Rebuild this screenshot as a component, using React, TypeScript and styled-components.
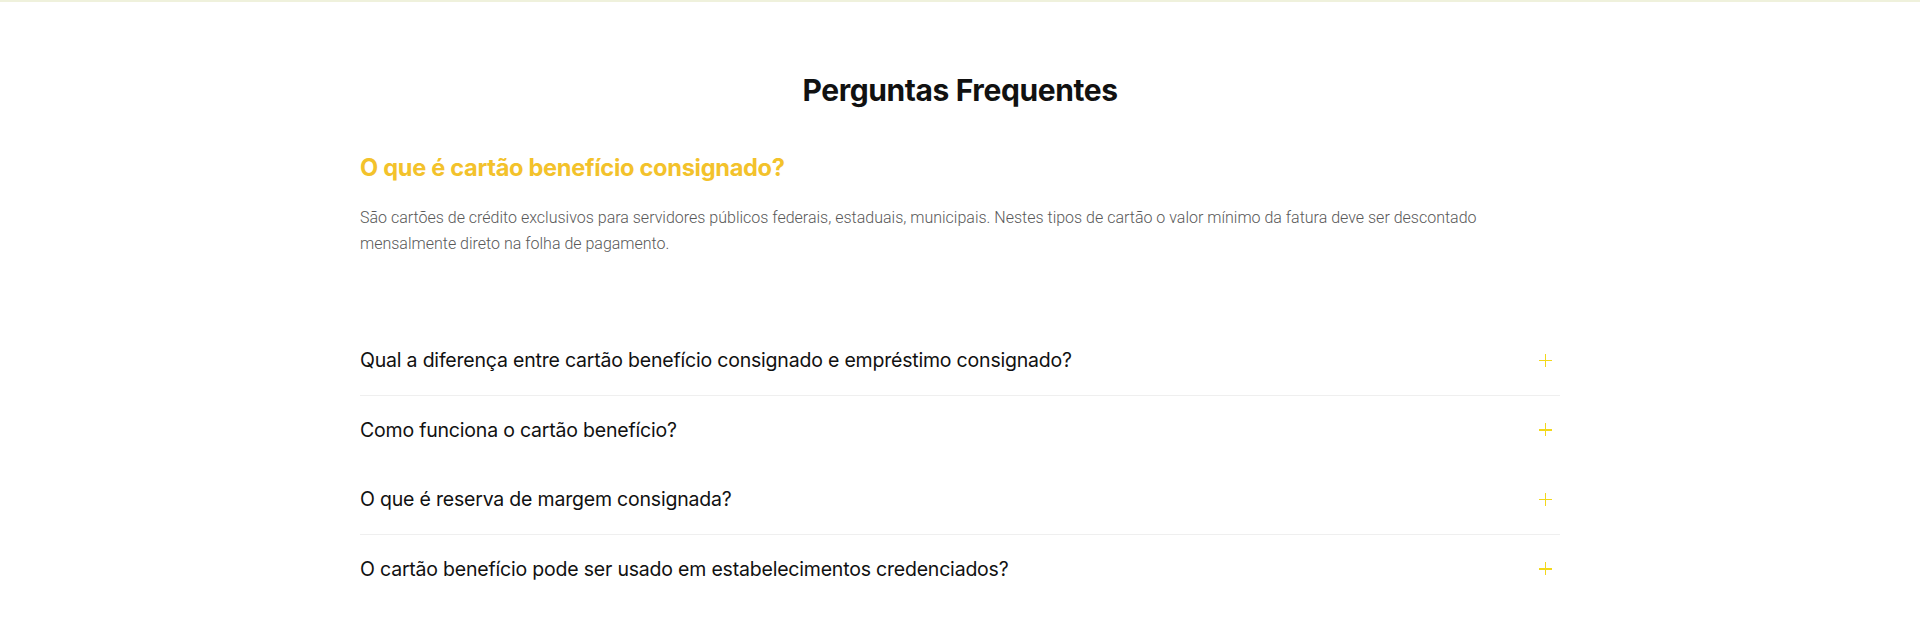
import React, { useState } from 'react';
import styled, { createGlobalStyle } from 'styled-components';

const GlobalStyle = createGlobalStyle`
  html, body {
    margin: 0;
    padding: 0;
    background: #ffffff;
  }
  * {
    box-sizing: border-box;
  }
`;

const Page = styled.div`
  min-height: 640px;
  border-top: 2px solid #eff1dc;
  font-family: Inter, 'Noto Sans', sans-serif;
`;

const Section = styled.section`
  width: 1200px;
  margin: 0 auto;
  padding-top: 68px;
`;

const Title = styled.h2`
  margin: 0 0 42px;
  text-align: center;
  font-size: 30px;
  line-height: 40px;
  font-weight: 700;
  letter-spacing: -0.4px;
  color: #111111;
`;

const OpenQuestion = styled.h3`
  margin: 0 0 21px;
  font-size: 23.6px;
  line-height: 32px;
  font-weight: 700;
  letter-spacing: -0.3px;
  color: #f3c22b;
`;

const Answer = styled.p`
  margin: 0 0 69px;
  font-family: Roboto, 'Liberation Sans', sans-serif;
  font-weight: 300;
  font-size: 16px;
  line-height: 26px;
  color: #595959;
  max-width: 1130px;
`;

const List = styled.div`
  display: flex;
  flex-direction: column;
`;

const Row = styled.button<{ $divided: boolean }>`
  display: flex;
  align-items: center;
  justify-content: space-between;
  height: 69.5px;
  padding: 0 4px 0 0;
  border: none;
  border-bottom: 1px solid ${({ $divided }) => ($divided ? '#efefef' : 'transparent')};
  background: none;
  cursor: pointer;
  text-align: left;
  font-family: Inter, 'Noto Sans', sans-serif;
  font-size: 19.5px;
  font-weight: 400;
  letter-spacing: -0.2px;
  color: #111111;
`;

const Plus = styled.span`
  position: relative;
  width: 13px;
  height: 13px;
  margin-right: 4px;
  &::before, &::after {
    content: '';
    position: absolute;
    background: #f2d81c;
  }
  &::before {
    left: 0;
    right: 0;
    top: 6px;
    height: 1.3px;
  }
  &::after {
    top: 0;
    bottom: 0;
    left: 6px;
    width: 1.3px;
  }
`;

const questions = [
  'Qual a diferença entre cartão benefício consignado e empréstimo consignado?',
  'Como funciona o cartão benefício?',
  'O que é reserva de margem consignada?',
  'O cartão benefício pode ser usado em estabelecimentos credenciados?',
];

const App: React.FC = () => {
  const [open, setOpen] = useState<number | null>(null);

  return (
    <Page>
      <GlobalStyle />
      <Section>
        <Title>Perguntas Frequentes</Title>
        <OpenQuestion>O que é cartão benefício consignado?</OpenQuestion>
        <Answer>
          São cartões de crédito exclusivos para servidores públicos federais, estaduais, municipais. Nestes tipos de
          cartão o valor mínimo da fatura deve ser descontado mensalmente direto na folha de pagamento.
        </Answer>
        <List>
          {questions.map((q, i) => (
            <Row key={q} $divided={i % 2 === 0} onClick={() => setOpen(open === i ? null : i)}>
              <span>{q}</span>
              <Plus />
            </Row>
          ))}
        </List>
      </Section>
    </Page>
  );
};

export default App;
